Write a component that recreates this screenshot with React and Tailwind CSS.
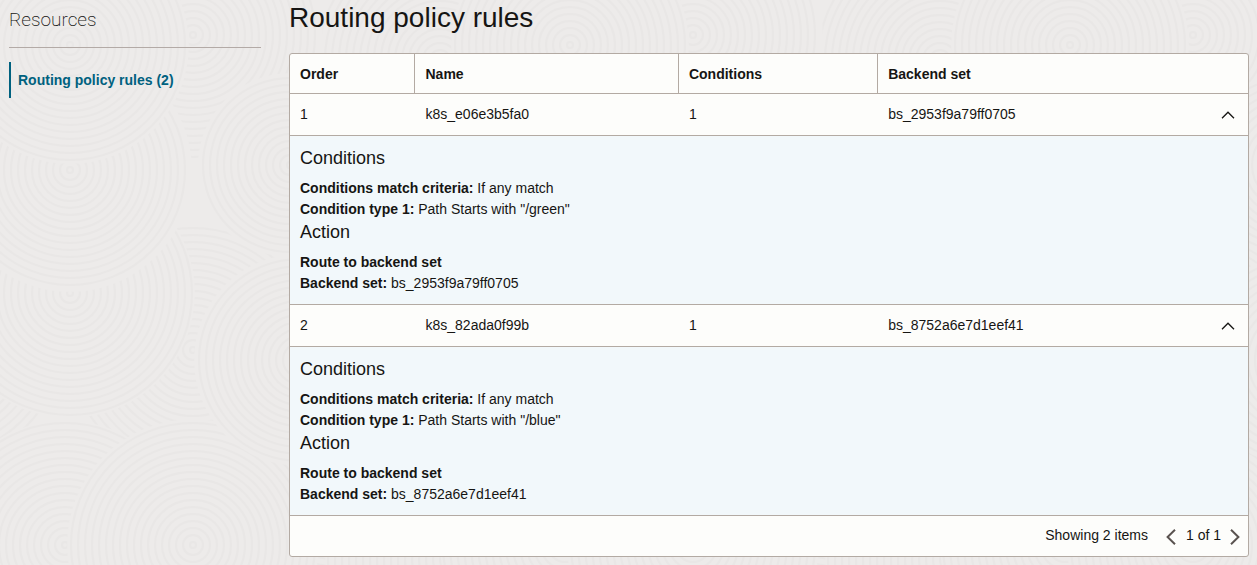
import { Fragment, useState } from "react";

const rules = [
  { order: 1, name: "k8s_e06e3b5fa0", backend: "bs_2953f9a79ff0705", path: "/green" },
  { order: 2, name: "k8s_82ada0f99b", backend: "bs_8752a6e7d1eef41", path: "/blue" },
];

const discs = [
  [440, 60, 125], [400, 200, 125], [440, 340, 125], [340, 480, 125], [450, 560, 125],
  [10, 180, 110], [193, 35, 130], [193, 350, 125], [70, 293, 125], [70, 170, 122],
  [70, 45, 119], [65, 545, 125], [193, 545, 126], [300, 360, 106], [290, 165, 92],
];

const radii = Array.from({ length: 18 }, (_, i) => 3 + i * 7);

function Backdrop() {
  return (
    <svg className="absolute inset-0 -z-10 h-full w-full" aria-hidden="true">
      <defs>
        <pattern id="swirls" width="500" height="620" patternUnits="userSpaceOnUse">
          <rect width="500" height="620" fill="#edebea" />
          {discs.flatMap(([x, y, r]) => [[x, y, r], [x + 500, y, r], [x - 500, y, r]]).map(([x, y, r], i) => (
            <g key={i} fill="none" stroke="#e9e7e6" strokeWidth="2">
              <circle cx={x} cy={y} r={r} fill="#edebea" stroke="none" />
              {radii.filter((v) => v < r).map((v) => (
                <circle key={v} cx={x} cy={y} r={v} />
              ))}
            </g>
          ))}
        </pattern>
      </defs>
      <rect width="100%" height="100%" fill="url(#swirls)" />
    </svg>
  );
}

function Chevron({ points, className, width = 2 }) {
  return (
    <svg className={className} viewBox={points.box} fill="none" stroke="currentColor" strokeWidth={width} aria-hidden="true">
      <path d={points.d} />
    </svg>
  );
}

const up = { box: "0 0 14 8", d: "M1 7.2 7 1.2l6 6" };
const left = { box: "0 0 10 16", d: "M9 .8 1.6 8 9 15.2" };
const right = { box: "0 0 10 16", d: "M1 .8 8.4 8 1 15.2" };

function Details({ rule }) {
  return (
    <div className="p-2.5 leading-[21px]">
      <h3 className="mb-2 text-lg leading-6">Conditions</h3>
      <p><b>Conditions match criteria:</b> If any match</p>
      <p><b>Condition type 1:</b> Path Starts with "{rule.path}"</p>
      <h3 className="mb-2 text-lg leading-6">Action</h3>
      <p><b>Route to backend set</b></p>
      <p><b>Backend set:</b> {rule.backend}</p>
    </div>
  );
}

export default function App() {
  const [closed, setClosed] = useState({});
  const toggle = (id) => setClosed((c) => ({ ...c, [id]: !c[id] }));

  return (
    <div className="relative isolate flex min-h-screen gap-7 bg-[#edebea] pr-2 pb-2 pl-[9px] font-['Liberation_Sans',Arial,sans-serif] text-sm text-[#161513]">
      <Backdrop />
      <aside className="w-[252px] shrink-0">
        <h2 className="border-b border-[#b3aaa6] pt-2 pb-[15px] font-[Roboto,sans-serif] text-[19px] leading-6 font-extralight text-[#161513]">Resources</h2>
        <nav className="mt-3.5">
          <a href="#rules" className="flex h-9 items-center border-l-2 border-[#00617f] pl-[7px] font-bold text-[#00617f]">
            Routing policy rules (2)
          </a>
        </nav>
      </aside>
      <main id="rules" className="min-w-0 flex-1">
        <h1 className="pb-[17px] text-[28px] leading-9">Routing policy rules</h1>
        <div className="overflow-hidden rounded-[3px] border border-[#b3aaa3] bg-[#fdfdfb]">
          <table className="w-full table-fixed border-separate border-spacing-0 text-left">
            <thead>
              <tr className="h-10 *:border-b *:border-[#b3aaa3] *:px-2.5 *:py-0">
                <th scope="col" className="w-[13.1%] border-r">Order</th>
                <th scope="col" className="w-[27.5%] border-r">Name</th>
                <th scope="col" className="w-[20.8%] border-r">Conditions</th>
                <th scope="col">Backend set</th>
              </tr>
            </thead>
            <tbody>
              {rules.map((rule, i) => (
                <Fragment key={rule.order}>
                  <tr className="h-[42px] *:border-b *:border-[#b3aaa3] *:px-2.5 *:pt-0 *:pb-0.5">
                    <td>{rule.order}</td>
                    <td>{rule.name}</td>
                    <td>1</td>
                    <td>
                      <div className="flex items-center justify-between">
                        {rule.backend}
                        <button type="button" aria-label={`Toggle rule ${rule.order}`} aria-expanded={!closed[i]} onClick={() => toggle(i)} className="px-[3px] pt-0.5">
                          <Chevron points={up} width={1.3} className={closed[i] ? "h-2 w-3.5 rotate-180" : "h-2 w-3.5"} />
                        </button>
                      </div>
                    </td>
                  </tr>
                  {!closed[i] && (
                    <tr>
                      <td colSpan={4} className="border-b border-[#b3aaa3] bg-[#f2f8fb] p-0">
                        <Details rule={rule} />
                      </td>
                    </tr>
                  )}
                </Fragment>
              ))}
            </tbody>
          </table>
          <div className="flex h-10 items-center justify-end pr-2 pb-0.5">
            <span className="mr-[18px]">Showing 2 items</span>
            <button type="button" aria-label="Previous page" className="pt-1 text-[#5b5451]"><Chevron points={left} className="h-4 w-2.5" /></button>
            <span className="mr-[9px] ml-2.5">1 of 1</span>
            <button type="button" aria-label="Next page" className="pt-1 text-[#5b5451]"><Chevron points={right} className="h-4 w-2.5" /></button>
          </div>
        </div>
      </main>
    </div>
  );
}
